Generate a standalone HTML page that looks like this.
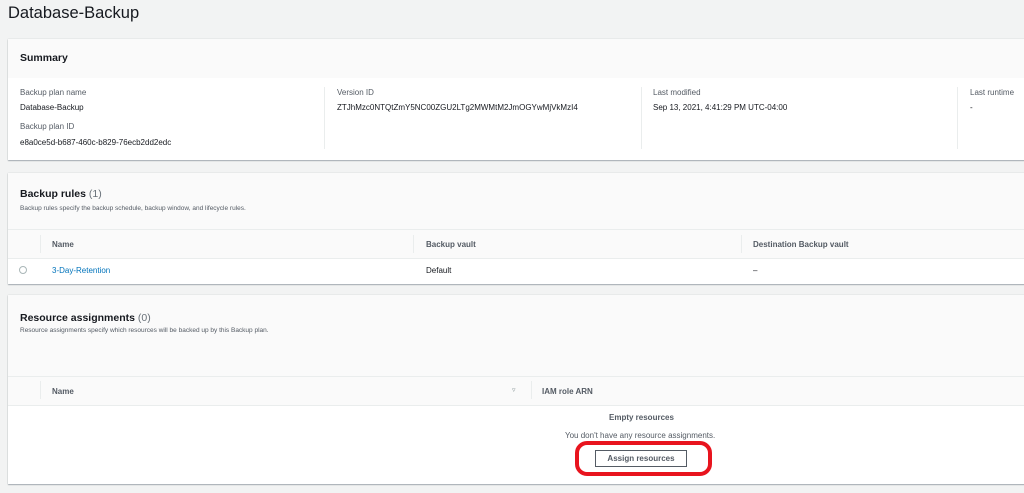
<!DOCTYPE html>
<html><head><style>
*{margin:0;padding:0;box-sizing:border-box}
body{width:1024px;height:493px;background:#f2f3f3;font-family:"Liberation Sans",sans-serif;color:#16191f;position:relative;overflow:hidden;font-size:8px}
.a{position:absolute;white-space:nowrap}
.card{position:absolute;left:8px;width:1030px;background:#fff;box-shadow:0 1px 1px rgba(0,22,40,.3),0 0 1px rgba(0,22,40,.2)}
.gray{position:absolute;left:0;width:100%;background:#fafafa}
.lbl{color:#545b64;font-size:8px}
.b{font-weight:bold}
.th{font-weight:bold;color:#545b64;font-size:8px}
.vl{position:absolute;width:1px;background:#eaeded}
.hl{position:absolute;left:0;width:100%;height:1px;background:#eaeded}
</style></head><body>
<div class="a" style="left:8px;top:4px;font-size:16.5px;color:#16191f">Database-Backup</div>

<div class="card" style="top:39px;height:121px">
 <div class="gray" style="top:0;height:39px"></div>
 <div class="a b" style="left:12px;top:13px;font-size:10.5px">Summary</div>
 <div class="a lbl" style="left:12px;top:49px">Backup plan name</div>
 <div class="a" style="left:12px;top:64px">Database-Backup</div>
 <div class="a lbl" style="left:12px;top:83px">Backup plan ID</div>
 <div class="a" style="left:12px;top:99px">e8a0ce5d-b687-460c-b829-76ecb2dd2edc</div>
 <div class="vl" style="left:316px;top:48px;height:62px"></div>
 <div class="a lbl" style="left:329px;top:49px">Version ID</div>
 <div class="a" style="left:329px;top:64px">ZTJhMzc0NTQtZmY5NC00ZGU2LTg2MWMtM2JmOGYwMjVkMzI4</div>
 <div class="vl" style="left:633px;top:48px;height:62px"></div>
 <div class="a lbl" style="left:645px;top:49px">Last modified</div>
 <div class="a" style="left:645px;top:64px">Sep 13, 2021, 4:41:29 PM UTC-04:00</div>
 <div class="vl" style="left:949px;top:48px;height:62px"></div>
 <div class="a lbl" style="left:962px;top:49px">Last runtime</div>
 <div class="a" style="left:962px;top:64px">-</div>
</div>

<div class="card" style="top:173px;height:111px">
 <div class="gray" style="top:0;height:86px"></div>
 <div class="a" style="left:12px;top:15px;font-size:10.5px"><b>Backup rules</b> <span style="color:#687078">(1)</span></div>
 <div class="a" style="left:12px;top:32px;font-size:6.5px;color:#545b64">Backup rules specify the backup schedule, backup window, and lifecycle rules.</div>
 <div class="hl" style="top:56px"></div>
 <div class="hl" style="top:85px"></div>
 <div class="vl" style="left:32px;top:62px;height:18px"></div>
 <div class="vl" style="left:405px;top:62px;height:18px"></div>
 <div class="vl" style="left:733px;top:62px;height:18px"></div>
 <div class="a th" style="left:44px;top:67px">Name</div>
 <div class="a th" style="left:418px;top:67px">Backup vault</div>
 <div class="a th" style="left:745px;top:67px">Destination Backup vault</div>
 <div class="a" style="left:11px;top:93px;width:8px;height:8px;border:1px solid #aab7b8;border-radius:50%"></div>
 <div class="a" style="left:44px;top:93px;color:#0073bb">3-Day-Retention</div>
 <div class="a" style="left:418px;top:93px">Default</div>
 <div class="a" style="left:745px;top:93px">–</div>
</div>

<div class="card" style="top:295px;height:189px">
 <div class="gray" style="top:0;height:110px"></div>
 <div class="a" style="left:12px;top:17px;font-size:10.5px"><b>Resource assignments</b> <span style="color:#687078">(0)</span></div>
 <div class="a" style="left:12px;top:32px;font-size:6.5px;color:#545b64">Resource assignments specify which resources will be backed up by this Backup plan.</div>
 <div class="hl" style="top:81px"></div>
 <div class="hl" style="top:110px"></div>
 <div class="vl" style="left:32px;top:86px;height:18px"></div>
 <div class="vl" style="left:523px;top:86px;height:18px"></div>
 <div class="a th" style="left:44px;top:92px">Name</div>
 <div class="a" style="left:504px;top:91px;color:#879596;font-size:7px">▿</div>
 <div class="a th" style="left:534px;top:92px">IAM role ARN</div>
 <div class="a th" style="left:601px;top:118px">Empty resources</div>
 <div class="a" style="left:557px;top:136px;color:#545b64">You don't have any resource assignments.</div>
 <div class="a" style="left:567px;top:146px;width:137px;height:35px;border:4px solid #e8141e;border-radius:12px"></div>
 <div class="a b" style="left:587px;top:155px;width:92px;height:17px;border:1px solid #545b64;background:#fff;color:#545b64;text-align:center;line-height:15px">Assign resources</div>
</div>
</body></html>
